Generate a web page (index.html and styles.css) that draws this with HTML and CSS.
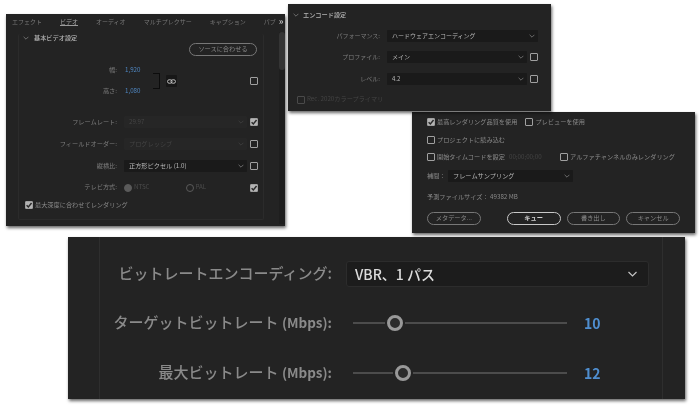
FILE: index.html
```html
<!DOCTYPE html>
<html lang="ja">
<head>
<meta charset="utf-8">
<title>書き出し設定</title>
<link rel="stylesheet" href="styles.css">
</head>
<body>
<svg class="defs" width="0" height="0"><defs>
  <symbol id="chev" viewBox="0 0 10 6"><path d="M1 1l4 4 4-4" fill="none" stroke="currentColor" stroke-width="1.2"/></symbol>
  <symbol id="tick" viewBox="0 0 10 10"><path d="M2 5.2l2.2 2.3L8.2 2.5" fill="none" stroke="#2a2a2a" stroke-width="1.8"/></symbol>
</defs></svg>

<section class="win win-video">
  <nav class="tabs">
    <span>エフェクト</span><span class="tab-on">ビデオ</span><span>オーディオ</span><span>マルチプレクサー</span><span>キャプション</span><span class="tab-cut">パブ</span><span class="tab-more">»</span>
  </nav>
  <div class="video-body">
    <div class="group">
      <h2 class="group-title"><svg class="chev-s"><use href="#chev"/></svg>基本ビデオ設定</h2>
      <div class="match-row"><button class="pill pill-match">ソースに合わせる</button></div>
      <div class="size-block">
        <div class="size-rows">
          <div class="size-row"><span class="lbl">幅:</span><span class="num">1,920</span></div>
          <div class="size-row"><span class="lbl">高さ:</span><span class="num">1,080</span></div>
        </div>
        <div class="bracket"></div>
        <div class="link"><svg viewBox="0 0 12 6" width="9" height="5"><rect x=".7" y=".7" width="6" height="4.6" rx="2.2" fill="none" stroke="#ccc" stroke-width="1.2"/><rect x="5.3" y=".7" width="6" height="4.6" rx="2.2" fill="none" stroke="#ccc" stroke-width="1.2"/></svg></div>
        <span class="box box-size"></span>
      </div>
      <div class="form-row">
        <span class="lbl">フレームレート:</span>
        <div class="sel sel-off"><span>29.97</span><svg class="chev-s"><use href="#chev"/></svg></div>
        <span class="box on"><svg><use href="#tick"/></svg></span>
      </div>
      <div class="form-row">
        <span class="lbl">フィールドオーダー:</span>
        <div class="sel sel-off"><span>プログレッシブ</span><svg class="chev-s"><use href="#chev"/></svg></div>
        <span class="box"></span>
      </div>
      <div class="form-row">
        <span class="lbl">縦横比:</span>
        <div class="sel"><span>正方形ピクセル (1.0)</span><svg class="chev-s"><use href="#chev"/></svg></div>
        <span class="box"></span>
      </div>
      <div class="form-row form-row-tv">
        <span class="lbl">テレビ方式:</span>
        <div class="radios">
          <span class="radio-item"><i class="radio radio-fill"></i>NTSC</span>
          <span class="radio-item"><i class="radio"></i>PAL</span>
        </div>
        <span class="box on"><svg><use href="#tick"/></svg></span>
      </div>
      <label class="check check-depth"><span class="box on"><svg><use href="#tick"/></svg></span>最大深度に合わせてレンダリング</label>
    </div>
    <div class="scroll"><i></i></div>
  </div>
</section>

<section class="win win-encode">
  <h2 class="encode-title"><svg class="chev-s"><use href="#chev"/></svg>エンコード設定</h2>
  <div class="enc-row">
    <span class="lbl">パフォーマンス:</span>
    <div class="sel sel-wide"><span>ハードウェアエンコーディング</span><svg class="chev-s"><use href="#chev"/></svg></div>
  </div>
  <div class="enc-row">
    <span class="lbl">プロファイル:</span>
    <div class="sel"><span>メイン</span><svg class="chev-s"><use href="#chev"/></svg></div>
    <span class="box"></span>
  </div>
  <div class="enc-row">
    <span class="lbl">レベル:</span>
    <div class="sel"><span>4.2</span><svg class="chev-s"><use href="#chev"/></svg></div>
    <span class="box"></span>
  </div>
  <label class="check check-rec"><span class="box box-off"></span>Rec. 2020カラープライマリ</label>
</section>

<section class="win win-export">
  <div class="line line-1">
    <label class="check"><span class="box on"><svg><use href="#tick"/></svg></span>最高レンダリング品質を使用</label>
    <label class="check"><span class="box"></span>プレビューを使用</label>
  </div>
  <div class="line line-2">
    <label class="check"><span class="box"></span>プロジェクトに読み込む</label>
  </div>
  <div class="line line-3">
    <label class="check check-start"><span class="box"></span>開始タイムコードを設定</label>
    <span class="tc">00;00;00;00</span>
    <label class="check check-alpha"><span class="box"></span>アルファチャンネルのみレンダリング</label>
  </div>
  <div class="line line-4">
    <span class="interp">補間：</span>
    <div class="sel sel-interp"><span>フレームサンプリング</span><svg class="chev-s"><use href="#chev"/></svg></div>
  </div>
  <div class="line line-5"><span class="est">予測ファイルサイズ： 49382 MB</span></div>
  <div class="actions">
    <button class="pill pill-meta">メタデータ...</button>
    <button class="pill pill-main">キュー</button>
    <button class="pill">書き出し</button>
    <button class="pill">キャンセル</button>
  </div>
</section>

<section class="win win-bitrate">
  <div class="bit-inner">
    <div class="bit-row bit-first">
      <span class="bit-lbl">ビットレートエンコーディング:</span>
      <div class="bit-sel"><span>VBR、1 パス</span><svg class="chev-l"><use href="#chev"/></svg></div>
    </div>
    <div class="bit-row bit-second">
      <span class="bit-lbl">ターゲットビットレート <span class="lat">(Mbps):</span></span>
      <div class="slider"><i class="track" style="flex-basis:32px"></i><i class="thumb"></i><i class="track track-rest"></i></div>
      <span class="bit-val">10</span>
    </div>
    <div class="bit-row bit-third">
      <span class="bit-lbl">最大ビットレート <span class="lat">(Mbps):</span></span>
      <div class="slider"><i class="track" style="flex-basis:40px"></i><i class="thumb"></i><i class="track track-rest"></i></div>
      <span class="bit-val">12</span>
    </div>
  </div>
</section>
</body>
</html>
```

FILE: styles.css
```css
* { box-sizing: border-box; }
html, body { margin: 0; height: 100%; }
body {
  position: relative;
  width: 700px;
  height: 407px;
  overflow: hidden;
  background: #fff;
  font-family: "Noto Sans CJK JP", "Noto Sans", sans-serif;
  font-size: 6.2px;
  color: #8a8a8a;
}
.defs { position: absolute; }
.win {
  position: absolute;
  background: #232323;
  box-shadow: 1px 2px 3px rgba(0, 0, 0, .6);
  line-height: 1;
  filter: blur(.3px);
}
h2 { margin: 0; font-weight: 500; color: #b4b4b4; font-size: 6.2px; }
button { font-family: inherit; margin: 0; padding: 0; background: none; cursor: default; }

/* shared small controls */
.lbl { text-align: right; color: #7e7e7e; white-space: nowrap; }
.box {
  flex: none;
  display: block;
  width: 8px;
  height: 8px;
  border: 1px solid #a0a0a0;
  border-radius: 1px;
}
.box svg { display: block; width: 8px; height: 8px; margin: -1px; }
.box.on { background: #b4b4b4; }
.box-off { border-color: #4a4a4a; }
.chev-s { width: 6px; height: 4px; color: #8a8a8a; flex: none; }
.sel {
  flex: 1;
  display: flex;
  align-items: center;
  justify-content: space-between;
  height: 12px;
  padding: 0 3px 0 5px;
  background: #1a1a1a;
  border-radius: 1px;
  color: #b8b8b8;
  white-space: nowrap;
}
.sel-off { background: #262626; color: #444; }
.sel-off .chev-s { color: #444; }
.check { display: flex; align-items: center; gap: 2px; white-space: nowrap; color: #8a8a8a; }
.pill {
  height: 13px;
  border: 1px solid #777;
  border-radius: 7px;
  color: #8a8a8a;
  font-size: 6.2px;
  line-height: 1;
  width: 54px;
}

/* video panel */
.win-video { left: 6px; top: 14px; width: 279px; height: 212px; }
.tabs { display: flex; height: 15px; padding-left: 6px; gap: 18px; color: #777; white-space: nowrap; font-size: 6px; }
.tabs span { line-height: 15px; height: 15px; }
.tab-on { color: #a5a5a5; border-bottom: 1px solid #9a9a9a; height: 12px !important; line-height: 15px !important; }
.tab-more { margin-left: -15px; font-weight: 700; color: #bbb; font-size: 9px; }
.video-body { display: flex; padding: 5px 0 0 12px; height: 197px; }
.group {
  width: 247px;
  height: 186px;
  border: 1px solid #2b2b2b;
  border-top: 0;
  border-radius: 2px;
}
.group-title { display: flex; align-items: center; gap: 5px; padding-left: 4px; height: 8px; }
.match-row { display: flex; justify-content: flex-end; padding-right: 6px; margin-top: 1px; }
.pill-match { width: 68px; }
.size-block { display: flex; align-items: center; height: 40px; margin-top: 5px; }
.size-rows { width: 134px; display: flex; flex-direction: column; gap: 13px; }
.size-row { display: flex; gap: 8px; height: 8px; align-items: center; }
.size-row .lbl { flex: 1; }
.size-row .num { width: 28px; color: #4f86c0; }
.bracket { width: 7px; height: 16px; border: 1px solid #0c0c0c; border-width: 1px 1px 1px 0; margin-right: 6px; }
.link { width: 11px; height: 12px; background: #171717; display: flex; align-items: center; justify-content: center; border-radius: 1px; margin-right: 73px; }
.form-row { display: grid; grid-template-columns: 98px 123px 8px; column-gap: 7px; align-items: center; height: 22px; }
.form-row .box { margin-left: -4px; }
.size-block + .form-row { margin-top: 10px; }
.form-row-tv { height: 21px; }
.radios { display: flex; color: #4c4c4c; }
.radio-item { display: flex; align-items: center; gap: 2px; width: 62px; }
.radio { display: block; width: 8px; height: 8px; border-radius: 50%; border: 1px solid #5a5a5a; }
.radio-fill { background: #5a5a5a; }
.check-depth { margin: 3px 0 0 6px; }
.scroll { width: 6px; height: 192px; margin: -2px 0 0 15px; background: #1e1e1e; }
.scroll i { display: block; height: 38px; background: #343434; border-radius: 3px; }

/* encode panel */
.win-encode { left: 288px; top: 4px; width: 263px; height: 107px; z-index: 2; padding-top: 7px; }
.encode-title { display: flex; align-items: center; gap: 4px; padding-left: 5px; height: 8px; margin-bottom: 6px; }
.enc-row { display: flex; align-items: center; height: 21.5px; padding-right: 13px; font-size: 6px; }
.enc-row .lbl { width: 92px; margin-right: 7px; flex: none; }
.enc-row .box { margin-left: 3px; }
.check-rec { margin: 6px 0 0 9px; color: #444; }

/* export panel */
.win-export { left: 412px; top: 112px; width: 283px; height: 121px; padding: 6px 15px 0; }
.line { display: flex; align-items: center; }
.line-1 { height: 8px; gap: 8px; }
.line-2 { height: 8px; margin-top: 10px; }
.line-3 { height: 8px; margin-top: 9px; }
.check-start { width: 78px; flex: none; }
.tc { color: #444; margin-left: 4px; width: 51px; white-space: nowrap; flex: none; }
.line-4 { height: 12px; margin-top: 9px; }
.interp { width: 21px; flex: none; white-space: nowrap; }
.sel-interp { flex: none; width: 125px; }
.line-5 { height: 8px; margin-top: 11px; }
.actions { display: flex; gap: 6px; margin-top: 11px; }
.pill-meta { margin-right: 20px; }
.pill-main { border-color: #c8c8c8; color: #d0d0d0; font-weight: 700; }

/* bitrate panel */
.win-bitrate { left: 68px; top: 237px; width: 617px; height: 162px; padding: 0 22px 0 31px; }
.bit-inner {
  height: 162px;
  width: 564px;
  border: 1px solid #2e2e2e;
  border-width: 0 1px;
  padding: 24px 13px 0 0;
}
.bit-row { display: flex; align-items: center; }
.bit-lbl { width: 232px; text-align: right; font-size: 15px; font-weight: 500; color: #8a8a8a; white-space: nowrap; padding-bottom: 3px; }
.lat { font-size: 13.5px; font-weight: 700; }
.bit-sel {
  display: flex;
  align-items: center;
  justify-content: space-between;
  margin-left: 14px;
  width: 303px;
  height: 26px;
  padding: 0 10px 0 8px;
  background: #1c1c1c;
  border: 1px solid #2c2c2c;
  border-radius: 3px;
  color: #dcdcdc;
  font-size: 14px;
  font-weight: 500;
}
.chev-l { width: 11px; height: 6px; color: #c4c4c4; }
.bit-first { height: 26px; }
.bit-second { height: 20px; margin-top: 26px; }
.bit-third { height: 20px; margin-top: 30px; }
.slider { display: flex; align-items: center; gap: 2px; width: 214px; margin-left: 21px; }
.track { display: block; height: 2px; background: #4c4c4c; flex: none; }
.track-rest { flex: 1; }
.thumb { display: block; flex: none; width: 16px; height: 16px; border-radius: 50%; border: 3px solid #999; background: #2b2b2b; }
.bit-val { margin-left: 17px; color: #4f8ecf; font-size: 14px; font-weight: 700; }
```
